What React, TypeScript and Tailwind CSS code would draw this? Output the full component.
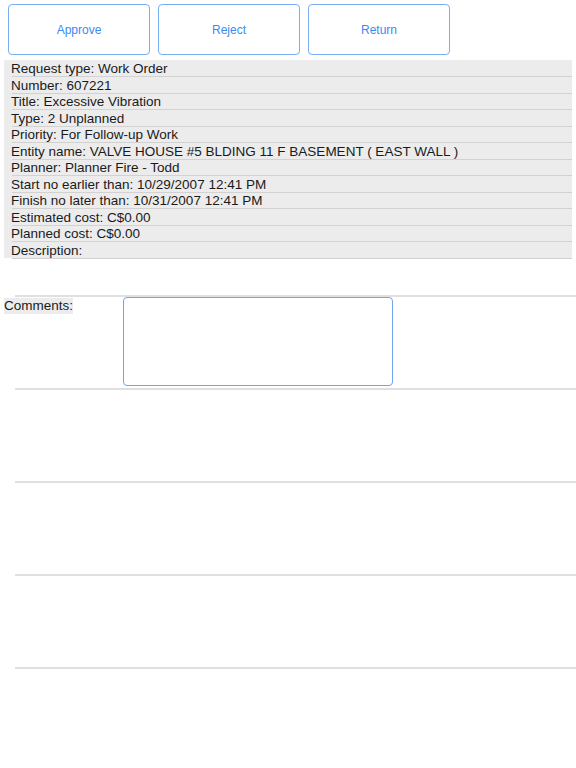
const fields = [
  "Request type: Work Order",
  "Number: 607221",
  "Title: Excessive Vibration",
  "Type: 2 Unplanned",
  "Priority: For Follow-up Work",
  "Entity name: VALVE HOUSE #5 BLDING 11 F BASEMENT ( EAST WALL )",
  "Planner: Planner Fire - Todd",
  "Start no earlier than: 10/29/2007 12:41 PM",
  "Finish no later than: 10/31/2007 12:41 PM",
  "Estimated cost: C$0.00",
  "Planned cost: C$0.00",
  "Description:",
];

function ActionButton({ label }: { label: string }) {
  return (
    <button
      type="button"
      className="h-[51px] w-[142px] rounded-[4px] border border-[#7aaef2] bg-white text-[12px] text-[#3d8af0]"
    >
      {label}
    </button>
  );
}

function Separator() {
  return <div className="ml-[15px] h-[2px] bg-[#e0e0e0]" />;
}

export default function App() {
  return (
    <div className="min-h-[768px] bg-white font-['Liberation_Sans',Arial,sans-serif] text-[#1a1a1a]">
      {/* action bar */}
      <div className="flex gap-[8px] pl-[8px] pt-[4px]">
        <ActionButton label="Approve" />
        <ActionButton label="Reject" />
        <ActionButton label="Return" />
      </div>

      {/* request details */}
      <div className="mx-[4px] mt-[5px] bg-[#ececec]">
        {fields.map((f) => (
          <div key={f} className="flex h-[16.5px] flex-col">
            <div className="flex-1 pl-[7px] pt-[2px] text-[13.5px] leading-[14px]">{f}</div>
            <div className="ml-[8px] h-[1.5px] bg-[#d2d2d2]" />
          </div>
        ))}
      </div>

      <div className="mt-[37px]">
        <Separator />
        <div className="flex h-[91px] items-start">
          <span className="ml-[4px] mt-[1px] bg-[#ececec] text-[13.5px] leading-[16px]">
            Comments:
          </span>
          <textarea className="ml-[50px] h-[89px] w-[270px] resize-none rounded-[4px] border border-[#6ea4f2] bg-white outline-none" />
        </div>
        {[0, 1, 2, 3].map((i) => (
          <div key={i}>
            <Separator />
            <div className="h-[91px]" />
          </div>
        ))}
      </div>
    </div>
  );
}
